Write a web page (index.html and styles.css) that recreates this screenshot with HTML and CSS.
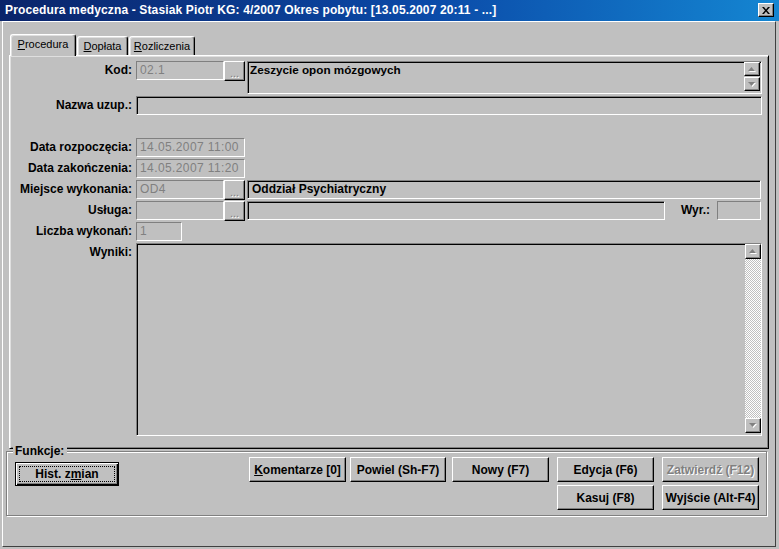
FILE: index.html
```html
<!DOCTYPE html>
<html lang="pl">
<head>
<meta charset="utf-8">
<title>Procedura medyczna</title>
<link rel="stylesheet" href="styles.css">
</head>
<body>
<div class="window">
  <div class="titlebar">
    <span class="title">Procedura medyczna - Stasiak Piotr KG: 4/2007 Okres pobytu: [13.05.2007 20:11 - ...]</span>
    <span class="close-btn"><svg width="8" height="7" viewBox="0 0 8 7"><path d="M0 0h2l2 2.4 2-2.4h2l-3 3.5 3 3.5h-2l-2-2.4-2 2.4h-2l3-3.5z" fill="#000"/></svg></span>
  </div>
  <div class="client">
    <div class="tabs">
      <div class="tab tab-active"><u>P</u>rocedura</div>
      <div class="tab tab-dopl"><u>D</u>opłata</div>
      <div class="tab tab-rozl"><u>R</u>ozliczenia</div>
    </div>
    <div class="panel">
      <div class="form">
        <div class="lbl">Kod:</div>
        <div class="row">
          <div class="inp dis code">02.1</div>
          <div class="btn ell">...</div>
          <div class="inp sunk memo">
            <div class="memo-text">Zeszycie opon mózgowych</div>
            <div class="spin">
              <div class="sbtn"><svg width="8" height="5" viewBox="0 0 8 5"><path d="M4.5 1L8 5H1z" fill="#fff"/><path d="M3.5 0L7 4H0z" fill="#808080"/></svg></div>
              <div class="sbtn"><svg width="8" height="5" viewBox="0 0 8 5"><path d="M1 1h7L4.5 5z" fill="#fff"/><path d="M0 0h7L3.5 4z" fill="#808080"/></svg></div>
            </div>
          </div>
        </div>

        <div class="lbl">Nazwa uzup.:</div>
        <div class="row"><div class="inp sunk grow"></div></div>

        <div class="spacer"></div>

        <div class="lbl">Data rozpoczęcia:</div>
        <div class="row"><div class="inp dis date">14.05.2007 11:00</div></div>

        <div class="lbl">Data zakończenia:</div>
        <div class="row"><div class="inp dis date">14.05.2007 11:20</div></div>

        <div class="lbl">Miejsce wykonania:</div>
        <div class="row row-short">
          <div class="inp dis code">OD4</div>
          <div class="btn ell">...</div>
          <div class="inp sunk grow bold">Oddział Psychiatryczny</div>
        </div>

        <div class="lbl">Usługa:</div>
        <div class="row row-short">
          <div class="inp dis code"></div>
          <div class="btn ell">...</div>
          <div class="inp sunk usl"></div>
          <div class="lbl wyr">Wyr.:</div>
          <div class="inp dis wyr-box"></div>
        </div>

        <div class="lbl">Liczba wykonań:</div>
        <div class="row"><div class="inp dis count">1</div></div>

        <div class="lbl">Wyniki:</div>
        <div class="row">
          <div class="inp sunk grow wyniki">
            <div class="memo-text"></div>
            <div class="vscroll">
              <div class="sbtn"><svg width="8" height="5" viewBox="0 0 8 5"><path d="M4.5 1L8 5H1z" fill="#fff"/><path d="M3.5 0L7 4H0z" fill="#808080"/></svg></div>
              <div class="track"></div>
              <div class="sbtn"><svg width="8" height="5" viewBox="0 0 8 5"><path d="M1 1h7L4.5 5z" fill="#fff"/><path d="M0 0h7L3.5 4z" fill="#808080"/></svg></div>
            </div>
          </div>
        </div>
      </div>
    </div>

    <fieldset class="funkcje">
      <legend>Funkcje:</legend>
      <div class="fgrid">
        <div class="btn default hist"><span class="focus">Hist. z<u>m</u>ian</span></div>
        <div class="btn c3"><u>K</u>omentarze [0]</div>
        <div class="btn c5">Powiel (Sh-F7)</div>
        <div class="btn c7">Nowy (F7)</div>
        <div class="btn c9">Edycja (F6)</div>
        <div class="btn c11 disabled">Zatwierdź (F12)</div>
        <div class="btn c9 r2">Kasuj (F8)</div>
        <div class="btn c11 r2">Wyjście (Alt-F4)</div>
      </div>
    </fieldset>
  </div>
</div>
</body>
</html>
```

FILE: styles.css
```css
* { box-sizing: border-box; }
html, body { margin: 0; padding: 0; }
body {
  width: 779px;
  height: 549px;
  background: #c0c0c0;
  font-family: "Liberation Sans", Arial, sans-serif;
  font-size: 11px;
  color: #000;
  overflow: hidden;
}
.window {
  width: 779px;
  height: 549px;
  display: flex;
  flex-direction: column;
}
.titlebar {
  height: 21px;
  flex: none;
  background: linear-gradient(to right, #0a246a 0%, #0b4aa8 55%, #1486d2 100%);
  display: flex;
  align-items: center;
  padding: 0 5px 1px 5px;
}
.title {
  flex: 1;
  color: #fff;
  font-weight: bold;
  font-size: 12px;
  letter-spacing: 0.14px;
  white-space: nowrap;
}
.close-btn {
  width: 16px;
  height: 14px;
  background: #c0c0c0;
  border: 1px solid;
  border-color: #fff #000 #000 #fff;
  box-shadow: inset -1px -1px #808080;
  display: flex;
  align-items: center;
  justify-content: center;
}
.client {
  flex: 1;
  margin: 0 3px 2px 2px;
  border: 1px solid;
  border-color: #fff #404040 #404040 #fff;
  padding-top: 12px;
}

/* tabs */
.tabs {
  display: flex;
  align-items: flex-end;
  gap: 1px;
  height: 21px;
  margin: 0 6px;
  padding-left: 1px;
}
.tab {
  height: 19px;
  background: #c0c0c0;
  border-top: 1px solid #fff;
  border-left: 1px solid #fff;
  border-right: 1px solid #000;
  box-shadow: inset -1px 0 #808080, inset 1px 1px #dfdfdf;
  border-radius: 3px 3px 0 0;
  text-align: center;
  padding-top: 3px;
  line-height: 13px;
  white-space: nowrap;
}
.tab-active {
  width: 66px;
  height: 22px;
  margin-bottom: -1px;
  position: relative;
  z-index: 1;
}
.tab-dopl { width: 51px; }
.tab-rozl { width: 66px; }

.panel {
  margin: 0 6px;
  height: 394px;
  border: 1px solid;
  border-color: #fff #000 #000 #fff;
  box-shadow: inset 1px 1px #dfdfdf, inset -1px -1px #808080;
  padding: 5px 6px 0 0;
}
.form {
  display: grid;
  grid-template-columns: 122px 1fr;
  grid-template-rows: 33px 19px 19px 19px 19px 19px 19px 19px 193px;
  column-gap: 4px;
  row-gap: 2px;
}
.spacer { grid-column: 1 / -1; }
.lbl {
  font-weight: bold;
  font-size: 12px;
  text-align: right;
  line-height: 19px;
  height: 19px;
  white-space: nowrap;
}
.row {
  display: flex;
  align-items: flex-start;
  min-width: 0;
}
.row-short { padding-right: 1px; }

.inp {
  height: 19px;
  background: #c0c0c0;
  border: 1px solid;
  border-color: #808080 #fff #fff #808080;
  padding: 0 3px;
  font-size: 12px;
  line-height: 17px;
  white-space: nowrap;
  overflow: hidden;
}
.dis { color: #808080; letter-spacing: 0.4px; }
.sunk { box-shadow: inset 1px 1px #000; }
.bold { font-weight: bold; padding-left: 4px; }
.grow { flex: 1; }
.code { width: 88px; }
.date { width: 109px; }
.count { width: 46px; }
.usl { width: 418px; }
.wyr { margin-left: auto; margin-right: 7px; }
.wyr-box { width: 44px; }

.btn {
  background: #c0c0c0;
  border: 1px solid;
  border-color: #fff #000 #000 #fff;
  box-shadow: inset -1px -1px #808080;
  display: flex;
  align-items: center;
  justify-content: center;
  font-weight: bold;
  font-size: 12px;
  white-space: nowrap;
}
.ell {
  width: 21px;
  height: 20px;
  margin-right: 2px;
  color: #808080;
  text-shadow: 1px 1px #fff;
  font-weight: normal;
  font-size: 11px;
  padding-top: 4px;
}

.memo {
  flex: 1;
  height: 33px;
  display: flex;
  padding: 0 1px 0 0;
}
.memo-text {
  flex: 1;
  font-weight: bold;
  font-size: 11.7px;
  padding: 1px 0 0 2px;
  line-height: 14px;
}
.spin {
  width: 16px;
  display: flex;
  flex-direction: column;
  gap: 1px;
}
.sbtn {
  width: 16px;
  height: 15px;
  flex: none;
  background: #c0c0c0;
  border: 1px solid;
  border-color: #fff #000 #000 #fff;
  box-shadow: inset -1px -1px #808080;
  display: flex;
  align-items: center;
  justify-content: center;
}
.spin .sbtn { height: 14px; }

.wyniki {
  height: 193px;
  display: flex;
  padding: 0 0 2px 0;
}
.vscroll {
  width: 16px;
  display: flex;
  flex-direction: column;
}
.track {
  flex: 1;
  background-color: #c0c0c0;
  background-image: repeating-conic-gradient(#fff 0 25%, #c0c0c0 0 50%);
  background-size: 2px 2px;
}

/* Funkcje group */
.funkcje {
  margin: -3px 8px 0 3px;
  padding: 0 0 5px 0;
  border: 1px solid #808080;
  box-shadow: inset 1px 1px #fff, 1px 1px #fff;
  min-inline-size: 0;
}
.funkcje legend {
  margin-left: 6px;
  padding: 0 3px 0 2px;
  font-weight: bold;
  font-size: 12px;
  line-height: 11px;
  background: #c0c0c0;
}
.fgrid {
  margin-left: 8px;
  display: grid;
  grid-template-columns: 104px 130px 97px 4px 96px 6px 97px 8px 97px 8px 97px;
  grid-template-rows: 25px 25px;
  row-gap: 3px;
}
.fgrid .btn { grid-row: 1; }
.fgrid .r2 { grid-row: 2; }
.c3 { grid-column: 3; }
.c5 { grid-column: 5; }
.c7 { grid-column: 7; }
.c9 { grid-column: 9; }
.c11 { grid-column: 11; }
.fgrid .hist {
  grid-column: 1;
  grid-row: 1 / span 2;
  align-self: start;
  margin-top: 5px;
  height: 24px;
  border: 1px solid #000;
  box-shadow: inset 1px 1px #fff, inset -1px -1px #000, inset -2px -2px #808080;
  padding: 3px;
}
.focus {
  flex: 1;
  align-self: stretch;
  display: flex;
  align-items: center;
  justify-content: center;
  border: 1px dotted #000;
}
.disabled {
  color: #808080;
  text-shadow: 1px 1px #fff;
}
```
